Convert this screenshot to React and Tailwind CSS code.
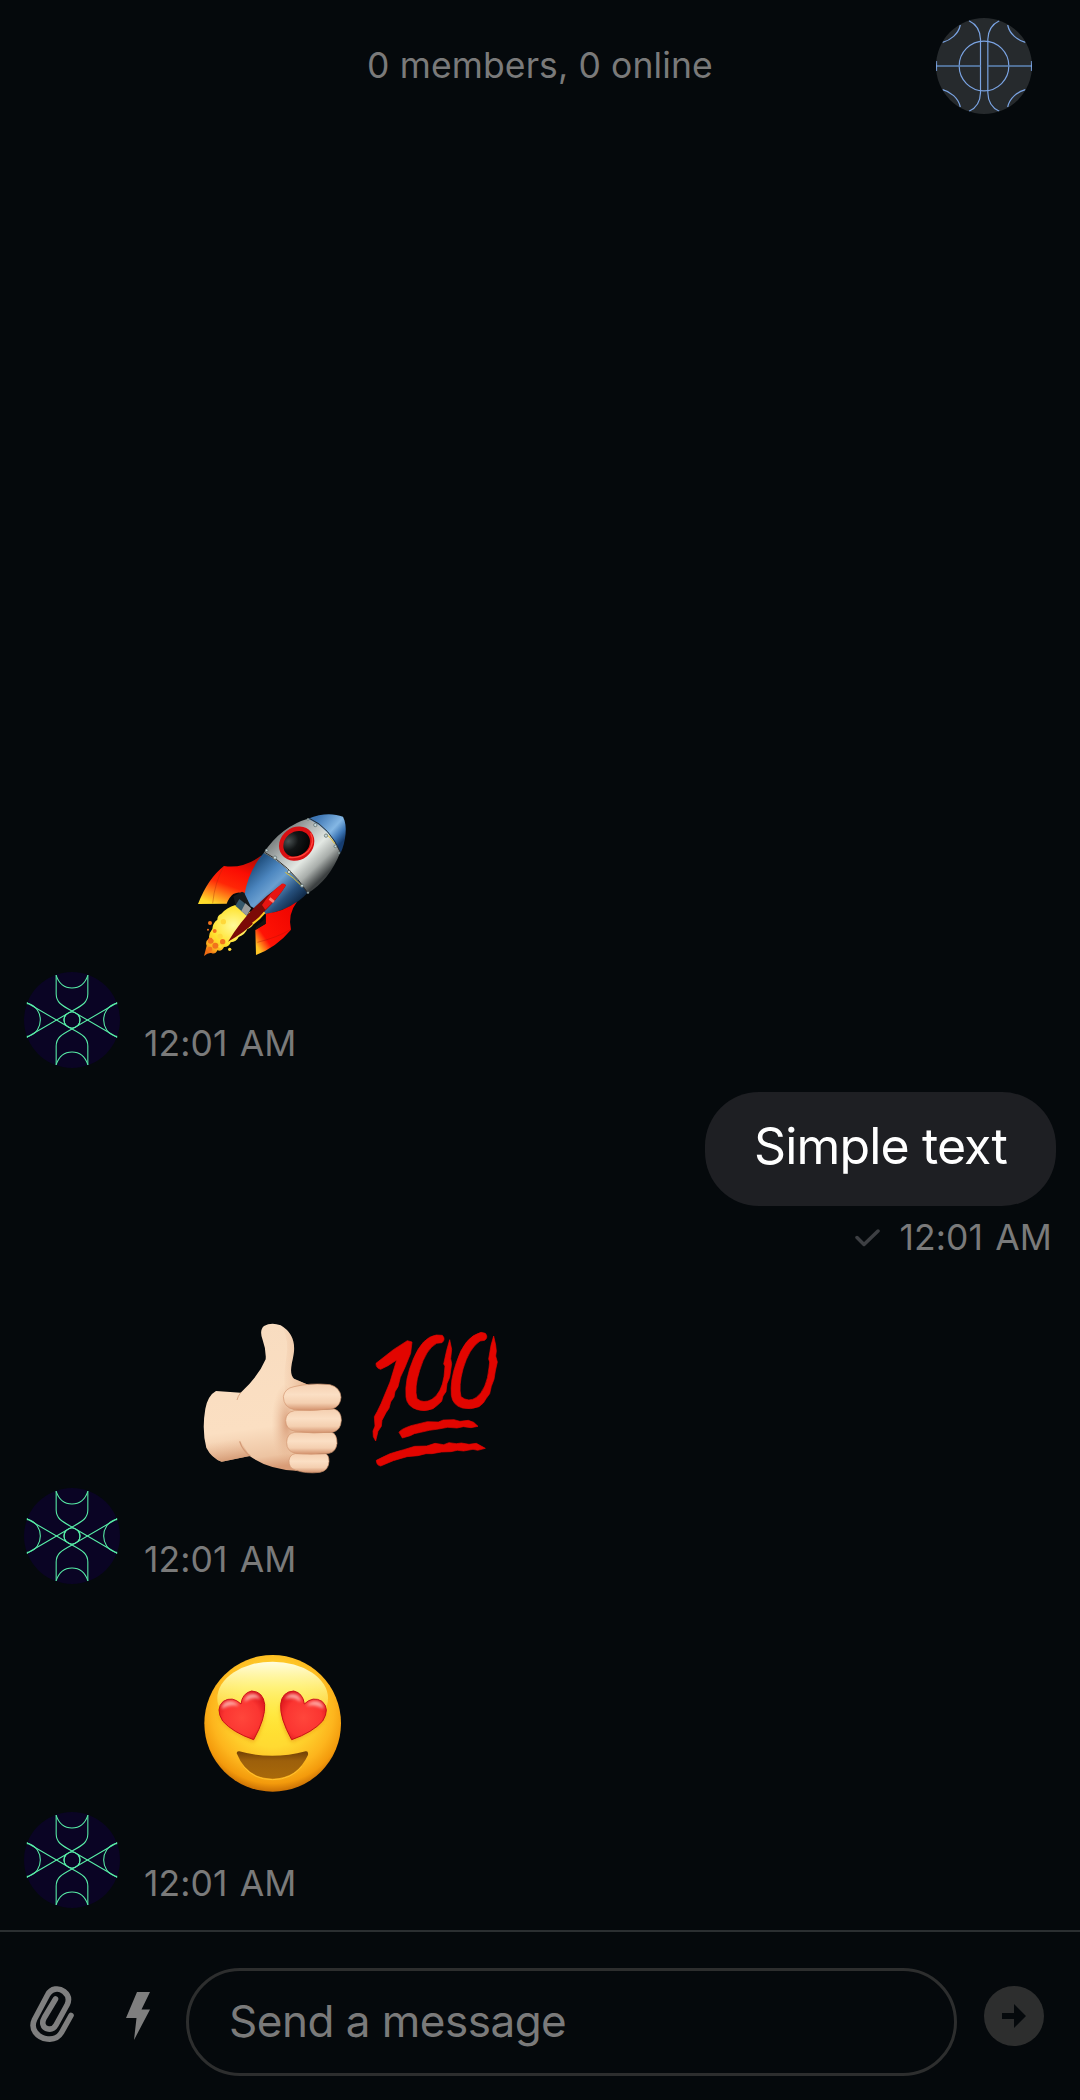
import React from 'react';

function GroupAvatar() {
  return (
    <svg className="h-24 w-24 rounded-full" viewBox="48 39 288 288" fill="none" stroke="#7aa3e2" strokeWidth="3.6">
      <rect x="48" y="39" width="288" height="288" fill="#262a2d" stroke="none" />
      <circle cx="192" cy="183" r="74.5" />
      <path d="M147 47C170 58 181 80 181.500 103V263C181 286 170 308 147 319M238 47C215 58 204 80 203.500 103V263C204 286 215 308 238 319" />
      <path d="M48 183H181M203 183H336" strokeWidth="5" stroke="#5f86b8" />
      <path d="M68 112C91 106 115 88 121 60M316 112C293 106 269 88 263 60M68 254C91 260 115 278 121 306M316 254C293 260 269 278 263 306" />
      <path d="M49.500 168V198M334.500 168V198" />
    </svg>
  );
}

function UserAvatar() {
  return (
    <svg className="h-24 w-24 shrink-0" viewBox="42 36 288 288" fill="none" stroke="#58efa8" strokeWidth="3.2">
      <circle cx="186" cy="180" r="144" fill="#0a0424" stroke="none" />
      <path d="M138.500 45V102C139 126 152 135 186 153L320 231M233.500 45V102C233 126 220 135 186 153L52 231" />
      <path d="M138.500 315V258C139 234 152 225 186 207L320 129M233.500 315V258C233 234 220 225 186 207L52 129" />
      <path d="M138.500 46C148 74 167 84 186 84S224 74 233.500 46M138.500 314C148 286 167 276 186 276S224 286 233.500 314" />
      <path d="M52 130C80 137 91 160 91 180S80 223 52 230M320 130C292 137 281 160 281 180S292 223 320 230" />
      <circle cx="186" cy="180" r="24" />
      <path d="M168 163Q156 180 168 197M204 163Q216 180 204 197" />
      <path d="M52 127V133M52 227V233M320 127V133M320 227V233" />
    </svg>
  );
}

function Rocket() {
  return (
    <svg className="h-[180px] w-[190px]" viewBox="0 0 570 540">
      <defs>
        <linearGradient id="rk-fin" x1=".75" y1="0" x2=".25" y2="1">
          <stop offset="0" stopColor="#b30d05" />
          <stop offset=".3" stopColor="#fb0d03" />
          <stop offset=".6" stopColor="#ff2606" />
          <stop offset="1" stopColor="#ffdc2b" />
        </linearGradient>
        <linearGradient id="rk-fin2" x1=".8" y1=".1" x2="0" y2=".8">
          <stop offset="0" stopColor="#f00600" />
          <stop offset=".75" stopColor="#ff1305" />
          <stop offset="1" stopColor="#ffc526" />
        </linearGradient>
        <linearGradient id="rk-body" gradientUnits="userSpaceOnUse" x1="300" y1="110" x2="430" y2="245">
          <stop offset="0" stopColor="#777c7c" />
          <stop offset=".3" stopColor="#b2b8b7" />
          <stop offset=".58" stopColor="#e3e8e3" />
          <stop offset=".8" stopColor="#a8adaa" />
          <stop offset="1" stopColor="#3c4041" />
        </linearGradient>
        <linearGradient id="rk-blue" gradientUnits="userSpaceOnUse" x1="210" y1="225" x2="325" y2="345">
          <stop offset="0" stopColor="#235383" />
          <stop offset=".3" stopColor="#4c86bf" />
          <stop offset=".5" stopColor="#6a9fd0" />
          <stop offset=".8" stopColor="#264f7b" />
          <stop offset="1" stopColor="#112c4c" />
        </linearGradient>
        <linearGradient id="rk-nose" gradientUnits="userSpaceOnUse" x1="420" y1="60" x2="496" y2="130">
          <stop offset="0" stopColor="#3e76b4" />
          <stop offset=".55" stopColor="#84b7e4" />
          <stop offset=".8" stopColor="#3c75b4" />
          <stop offset="1" stopColor="#163d70" />
        </linearGradient>
        <radialGradient id="rk-flame" cx=".5" cy=".4" r=".68">
          <stop offset="0" stopColor="#fffb9a" />
          <stop offset=".55" stopColor="#ffe22e" />
          <stop offset=".82" stopColor="#fcb41f" />
          <stop offset="1" stopColor="#ef6b12" />
        </radialGradient>
        <radialGradient id="rk-glass" cx=".35" cy=".25" r=".8">
          <stop offset="0" stopColor="#4a5152" />
          <stop offset=".4" stopColor="#121516" />
          <stop offset="1" stopColor="#000" />
        </radialGradient>
      </defs>
      <path d="M166 330Q140 338 124 356Q112 360 112 374Q98 384 97 402Q84 418 88 430Q74 440 80 452L72 483Q84 472 94 474Q106 480 112 466Q126 470 132 456Q148 456 152 442Q170 440 176 426Q196 418 202 402Q220 396 226 374L248 352L208 350Z" fill="url(#rk-flame)" />
      <g fill="#f2731c">
        <circle cx="92" cy="437" r="9" /><circle cx="106" cy="452" r="9" /><circle cx="90" cy="462" r="7" /><circle cx="128" cy="440" r="8" /><circle cx="104" cy="408" r="6" /><circle cx="90" cy="384" r="6" /><circle cx="84" cy="404" r="3" />
      </g>
      <g fill="#ffd83a">
        <circle cx="120" cy="424" r="8" /><circle cx="101" cy="430" r="4" /><circle cx="130" cy="380" r="8" /><circle cx="121" cy="454" r="5" /><circle cx="149" cy="463" r="5" />
      </g>
      <path d="M132 213Q190 222 245 181Q216 230 204 280L196 300Q180 286 160 297Q148 306 140 326L54 327Q84 250 132 213Z" fill="url(#rk-fin)" />
      <path d="M132 213Q104 262 98 325" fill="none" stroke="#a92808" strokeWidth="1.500" opacity=".7" />
      <path d="M160 304L186 290L200 296L214 340L202 362L166 326Z" fill="#15191b" />
      <path d="M178 312L213 340L200 362L166 332Z" fill="#35586b" />
      <path d="M196 325L213 340L200 362L184 348Z" fill="#9a9d9c" />
      <path d="M251 174Q326 212 382 294Q336 344 256 358L212 334L194 296Q206 226 251 174Z" fill="url(#rk-blue)" />
      <path d="M251 174Q304 94 388 70Q452 98 481 172Q448 256 383 295Q326 212 251 174Z" fill="url(#rk-body)" />
      <path d="M384 71C425 54 460 54 489 65C504 92 497 140 482 174Q448 100 384 71Z" fill="url(#rk-nose)" />
      <path d="M388 70Q450 98 481 172M254 172Q326 208 384 294" fill="none" stroke="#2b2f31" strokeWidth="3" />
      <path d="M316 232Q340 246 362 270M440 118Q454 130 464 146" fill="none" stroke="#e7c32b" strokeWidth="3" />
      <g fill="#c8d9dc" stroke="#53605f" strokeWidth="2">
        <circle cx="260" cy="166" r="4" /><circle cx="285" cy="188" r="5" /><circle cx="327" cy="231" r="5" /><circle cx="366" cy="272" r="4.500" /><circle cx="384" cy="293" r="3" /><circle cx="384" cy="73" r="3" /><circle cx="406" cy="90" r="5" /><circle cx="438" cy="122" r="5" /><circle cx="466" cy="154" r="4" /><circle cx="477" cy="174" r="3" />
      </g>
      <ellipse cx="350" cy="146" rx="49" ry="42" transform="rotate(-38 350 146)" fill="url(#rk-glass)" stroke="#d80f12" strokeWidth="13" />
      <path d="M392 114Q406 144 384 169Q360 192 326 187" fill="none" stroke="#ff4339" strokeWidth="4" />
      <path d="M351 320Q322 358 333 404Q290 456 228 480L226 405L257 386L258 356Q310 350 351 320Z" fill="url(#rk-fin2)" />
      <path d="M232 442Q290 428 333 403" fill="none" stroke="#a51205" strokeWidth="1.500" opacity=".7" />
      <path d="M228 396L256 370L257 386L226 405Z" fill="#171310" />
      <path d="M300 272Q208 336 144 440Q212 402 252 351Q294 310 318 271Q308 262 300 272Z" fill="#7c0a07" />
      <path d="M301 270Q270 293 246 330L256 344Q294 310 318 271Q310 261 301 270Z" fill="#e61512" />
      <path d="M266 314L279 324L284 317L271 307Z" fill="#ff8275" />
      <path d="M218 386Q240 370 254 352" stroke="#ffcc22" strokeWidth="6" fill="none" />
    </svg>
  );
}

function ThumbsUp() {
  return (
    <svg className="mb-px h-[190px] w-[173px]" viewBox="0 0 519 570">
      <defs>
        <linearGradient id="th-skin" x1=".3" y1="0" x2=".4" y2="1">
          <stop offset="0" stopColor="#f8dcc0" />
          <stop offset=".72" stopColor="#fbdfc2" />
          <stop offset=".92" stopColor="#edc4a2" />
          <stop offset="1" stopColor="#d99c77" />
        </linearGradient>
        <linearGradient id="th-finger" x1="0" y1="0" x2="0" y2="1">
          <stop offset="0" stopColor="#f4cfb0" />
          <stop offset=".4" stopColor="#fbdfc4" />
          <stop offset=".72" stopColor="#f4cfb0" />
          <stop offset="1" stopColor="#d3916c" />
        </linearGradient>
        <radialGradient id="th-shade" cx=".7" cy=".5" r=".5">
          <stop offset="0" stopColor="#cd8862" stopOpacity=".75" />
          <stop offset="1" stopColor="#e8b896" stopOpacity="0" />
        </radialGradient>
        <linearGradient id="th-edge" x1="0" y1="0" x2="1" y2="0">
          <stop offset="0" stopColor="#e6b28e" stopOpacity="0" />
          <stop offset="1" stopColor="#dca27b" stopOpacity=".7" />
        </linearGradient>
        <linearGradient id="th-wrist" x1=".4" y1="0" x2=".5" y2="1">
          <stop offset=".7" stopColor="#e6b28e" stopOpacity="0" />
          <stop offset="1" stopColor="#cf926c" stopOpacity=".85" />
        </linearGradient>
      </defs>
      <path d="M108 273L182 278Q235 230 257 178Q259 150 248 120Q237 91 252 78Q274 66 302 76Q346 102 342 154Q340 172 335 192Q329 226 342 236L384 254L400 480L348 512Q264 508 209 468L125 485Q95 474 79 443Q65 390 76 326Q84 286 108 273Z" fill="url(#th-skin)" />
      <path d="M108 273L182 278L180 420L209 468L125 485Q95 474 79 443Q65 390 76 326Q84 286 108 273Z" fill="url(#th-wrist)" />
      <path d="M304 77Q346 102 342 154L335 192Q329 226 342 236L384 254L315 270Q310 220 318 180Q330 120 304 77Z" fill="url(#th-edge)" />
      <ellipse cx="302" cy="370" rx="46" ry="122" fill="url(#th-shade)" />
      <path d="M182 278Q174 288 171 300" fill="none" stroke="#dba783" strokeWidth="3" />
      <path d="M179 424Q188 452 211 468" fill="none" stroke="#d39a76" strokeWidth="4" />
      <g fill="url(#th-finger)" stroke="#d19570" strokeWidth="2">
        <path d="M346 461H436Q447 464 447 484Q446 512 420 517Q378 522 345 510Q326 503 327 482Q329 463 346 461Z" />
        <path d="M344 397H455Q471 402 471 430Q468 456 447 460Q390 465 346 460Q320 454 320 428Q320 400 344 397Z" />
        <path d="M343 332L463 327Q484 334 484 361Q482 390 461 396Q400 403 344 394Q317 388 317 361Q318 337 343 332Z" />
        <path d="M342 260Q390 248 450 254Q481 262 483 292Q481 319 458 326Q400 335 342 329Q311 322 310 290Q314 265 342 260Z" />
      </g>
    </svg>
  );
}

function Hundred() {
  return (
    <svg className="mb-px h-[190px] w-[167px]" viewBox="519 0 501 570" fill="#e20500" stroke="#e20500" strokeWidth="2" strokeLinejoin="round">
      <path d="M588 190L640 149L682 122L696 126L692 160L675 202L661 232L654 260L645 275L642 291L632 306L627 325L618 338L606 361L604 379L594 394L587 423L580 410L579 393L585 378L583 350L592 334L603 311L630 246L650 180L624 197L602 208Q587 204 588 190Z" />
      <path d="M787 106Q798 118 786 128L770 130Q738 147 719 211Q702 263 711 296Q730 312 756 298Q785 278 792 230L795 198L791 192L800 151L809 119L815 148L812 176L815 191L809 232L801 251L798 275L789 288L785 304L772 316L759 326Q735 336 712 329Q681 320 678 291Q673 240 700 177Q727 111 769 105Z" />
      <path d="M916 100Q926 112 914 121L900 123Q867 145 849 207Q835 258 843 290Q865 308 888 293Q921 268 927 203L929 186L926 177L933 136L941 108L947 135L949 153L947 168L952 186L946 213L942 238L934 259L929 281L919 295L910 309L897 320Q873 330 847 324Q818 316 814 286Q810 240 829 188Q853 110 903 97Z" />
      <path d="M657 397Q661 388 693 377L742 365L775 366L790 360L822 359L840 364L865 361L881 367L894 379L873 383L850 380L831 384L803 382L776 387L748 391L722 397L703 401L691 407L667 414Z" />
      <path d="M589 481Q630 457 671 449L704 439L740 438L765 430L791 434L807 428L829 431L844 429L867 433L889 430L916 445L893 451L879 448L851 453L832 451L813 455L785 456L756 461L738 461L714 467L681 470L640 482L602 498Q589 496 589 481Z" />
    </svg>
  );
}

function HeartEyes() {
  return (
    <svg className="h-[180px] w-[180px]" viewBox="0 0 540 540">
      <defs>
        <radialGradient id="fc-base" gradientUnits="userSpaceOnUse" cx="278" cy="225" r="245">
          <stop offset="0" stopColor="#ffe733" />
          <stop offset=".45" stopColor="#ffda32" />
          <stop offset=".75" stopColor="#fdb51d" />
          <stop offset=".9" stopColor="#f39a0c" />
          <stop offset="1" stopColor="#c96f04" />
        </radialGradient>
        <linearGradient id="fc-shine" x1="0" y1="0" x2="0" y2="1">
          <stop offset="0" stopColor="#fffde0" />
          <stop offset=".35" stopColor="#fff78c" stopOpacity=".8" />
          <stop offset="1" stopColor="#ffe536" stopOpacity="0" />
        </linearGradient>
        <radialGradient id="fc-heart" cx=".5" cy=".55" r=".6">
          <stop offset="0" stopColor="#ff463b" />
          <stop offset=".65" stopColor="#fb3531" />
          <stop offset="1" stopColor="#dc141b" />
        </radialGradient>
        <linearGradient id="fc-mouth" x1="0" y1="0" x2="0" y2="1">
          <stop offset="0" stopColor="#714006" />
          <stop offset=".35" stopColor="#9d600b" />
          <stop offset="1" stopColor="#a9690a" />
        </linearGradient>
        <filter id="fc-soft" x="-30%" y="-30%" width="160%" height="160%"><feGaussianBlur stdDeviation="6" /></filter>
        <filter id="fc-glow" x="-30%" y="-30%" width="160%" height="160%"><feGaussianBlur stdDeviation="4" /></filter>
      </defs>
      <circle cx="278" cy="265" r="205" fill="url(#fc-base)" />
      <ellipse cx="278" cy="190" rx="166" ry="110" fill="url(#fc-shine)" />
      <g fill="#e98a12" opacity=".75" filter="url(#fc-soft)">
        <path d="M221 321Q120 275 119 235Q180 210 250 205Q260 255 221 321Z" />
        <path d="M335 321Q436 275 437 235Q376 210 306 205Q296 255 335 321Z" />
      </g>
      <g id="heart-left">
        <path d="M221 314Q158 292 128 258Q105 221 130 199Q157 182 183 207Q187 174 215 168Q250 170 254 208Q257 249 221 314Z" fill="url(#fc-heart)" stroke="#c90f18" strokeWidth="3" />
        <g fill="#ffc0ba" opacity=".8" filter="url(#fc-glow)">
          <path d="M126 214Q132 198 152 198Q168 200 176 212Q148 207 126 222Z" />
          <path d="M194 194Q199 176 219 176Q236 178 242 193Q217 183 194 200Z" />
        </g>
      </g>
      <use href="#heart-left" transform="translate(556 0) scale(-1 1)" />
      <path d="M170 355Q170 348 178 349Q275 376 377 349Q386 348 384 360Q352 430 278 431Q200 430 170 355Z" fill="url(#fc-mouth)" />
      <path d="M190 394Q222 434 278 434Q333 434 366 394" fill="none" stroke="#ffc12c" strokeWidth="3" />
    </svg>
  );
}

function Time() {
  return <span className="block h-12 text-[35.5px] leading-[48px] tracking-[0.1px] [word-spacing:2px] whitespace-nowrap text-[#7a7a7a]">12:01 AM</span>;
}

function Incoming({ children }) {
  return (
    <div className="flex items-end gap-6 pl-6">
      <UserAvatar />
      <div className="flex flex-col gap-[45px]">
        <div className="flex pl-9">{children}</div>
        <Time />
      </div>
    </div>
  );
}

export default function App() {
  return (
    <div className="flex h-[2100px] w-[1080px] flex-col overflow-hidden bg-[#05090c] font-['Inter',sans-serif]">
      <header className="grid h-[132px] grid-cols-[1fr_auto_1fr] items-center">
        <span />
        <h1 className="text-[35.5px] leading-[48px] tracking-[0.12px] whitespace-nowrap text-[#7a7a7a]">0 members, 0 online</h1>
        <div className="flex justify-end pr-12"><GroupAvatar /></div>
      </header>

      <main className="flex flex-1 flex-col justify-end pb-[22px]">
        <Incoming><Rocket /></Incoming>
        <div className="mt-6 flex h-[208px] flex-col items-end pr-6">
          <div className="flex h-[114px] w-[351px] items-center justify-center rounded-[54px] bg-[#1e1f23] pb-[5px] text-[50px] tracking-[-0.85px] whitespace-nowrap text-white">Simple text</div>
          <div className="mt-2 flex items-center gap-5 pr-1">
            <svg className="h-[18px] w-[25px]" viewBox="0 0 25 18" fill="none" stroke="#3d3f43" strokeWidth="3.500" strokeLinecap="round" strokeLinejoin="round">
              <path d="M2 8.500L9 15.500L23 2" />
            </svg>
            <Time />
          </div>
        </div>
        <Incoming><ThumbsUp /><Hundred /></Incoming>
        <div className="mt-[51px]"><Incoming><HeartEyes /></Incoming></div>
      </main>

      <footer className="flex h-[170px] items-start border-t-2 border-[#2b2f31] pt-9">
        <svg className="ml-[30px] mt-[18px] h-14 w-11" viewBox="0 0 44 56" fill="none" stroke="#7f7f7f" strokeLinecap="round" strokeLinejoin="round" strokeWidth="5.600">
          <path d="M41 29.500L31.500 46.500C28 52.500 22 53.500 17.500 53C7 51.500 0 43 4.500 33.500L17.500 9C21 2 29 1.500 34 5.500C39 9.500 39.500 14 37 19L26 39C22 46 14 43 13 38.500C12 35 13 34 15 30.500L25.500 13" />
        </svg>
        <svg className="ml-[52px] mt-6 h-12 w-6" viewBox="0 0 24 48" fill="#7f7f7f">
          <path d="M11 0H24L15.500 17.500H24L8 48L10.500 26H0Z" />
        </svg>
        <div className="ml-9 flex h-[108px] w-[771px] items-center rounded-[54px] border-[3px] border-[#2d2e2e] pb-0.5 pl-10 text-[44px] tracking-[-0.5px] whitespace-nowrap text-[#7a7a7a]">Send a message</div>
        <button className="mt-[18px] ml-[27px] flex h-[60px] w-[60px] items-center justify-center rounded-full bg-[#2d2e2e]">
          <svg className="h-6 w-6" viewBox="0 0 24 24" fill="#05090c"><path d="M0 9H12V0L24 12L12 24V15H0Z" /></svg>
        </button>
      </footer>
    </div>
  );
}
